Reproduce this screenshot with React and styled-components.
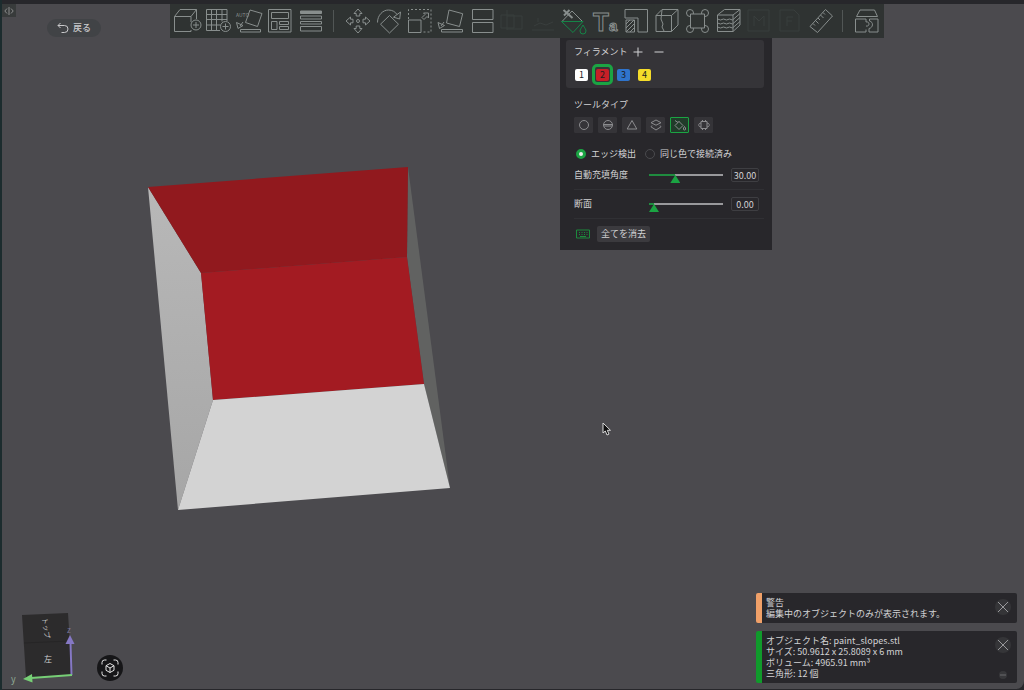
import React, { useState } from "react";
import styled, { createGlobalStyle } from "styled-components";

const ICONS = {
  addCube: (
    <>
      <path d="M18 15V9.500H1.500V24.500H18V23M1.500 9.500L7 2.500H23.500V12M18 9.500L23.500 2.500" />
      <circle cx="23" cy="18" r="5" />
      <path d="M23 15v6M20 18h6" />
    </>
  ),
  addPlate: (
    <>
      <path d="M2.500 2.500H23V14M2.500 2.500V23.500H16M7.500 2.500v21M12.500 2.500v21M18 2.500v12M2.500 7.500h20.500M2.500 12.500h20.500M2.500 18h14" />
      <circle cx="21.500" cy="19.500" r="5" />
      <path d="M21.500 16.500v6M18.500 19.500h6" />
    </>
  ),
  autoOrient: (
    <>
      <path d="M15 3l12 3.500-4.500 13-12-4zM5.500 22.500h20v2.500h-20zM8 15l-3 4M1.500 15.500l1.500 6 5-3z" />
      <text x="1" y="10" fontSize="5" stroke="none" fill="currentColor">
        AUTO
      </text>
    </>
  ),
  arrange: (
    <path d="M2.500 2.500h22.500v22.500H2.500zM5.500 5.500h17v6h-17zM5.500 14.500h5.500v8H5.500zM13.500 14.500h9v3h-9zM13.500 19.500h9v3h-9z" />
  ),
  layerHeight: (
    <>
      <path d="M3.500 4h21v2.500h-21z" fill="currentColor" />
      <path d="M3.500 9h21v3h-21zM3.500 14.500h21v2.500h-21zM3.500 19.500h21v4.500h-21z" />
    </>
  ),
  move: (
    <>
      <circle cx="14" cy="14" r="1.500" />
      {[0, 90, 180, 270].map((a) => (
        <path
          key={a}
          d="M14 2l4 4.500h-2.200v2.500h-3.600V6.500H10z"
          transform={`rotate(${a} 14 14)`}
        />
      ))}
    </>
  ),
  rotate: (
    <path d="M14.500 8.500l9 8.700-9 8.800-9-8.800zM2.500 15.500C2.500 8 8 3 13.500 3c4 0 7 2 8.500 4.500M25.500 5l-.8 7-6.200-1.800z" />
  ),
  scale: (
    <>
      <path d="M2.500 12V2.500H25V25H16" strokeDasharray="2 2" />
      <path d="M2.500 13h12.500v12.500H2.500zM16 10.500l3-3-1.500-1.500h5v5l-1.500-1.500-3 3z" />
    </>
  ),
  layFace: (
    <path d="M12 3l13.700 3.700L22.500 19.500 9.500 16zM4.500 22.500h21v2.500h-21zM7 15l-3 4M1 15.500l1.500 6 5-3z" />
  ),
  cut: <path d="M4.500 2.500H25V12.500H4.500zM4.500 15.500H25V25.500H4.500z" />,
  boolean: <path d="M3 8h13v13H3zM9 3v20M9 9h15v13H9" />,
  support: <path d="M3 23h22M5 19l6-3 6 2 7-3M9 11v4" />,
  paint: (
    <>
      <path d="M2 14.500L12 4l10.500 10.500z" />
      <path d="M3.500 3l9 8M4 8.500L9.500 3" strokeWidth="2" />
      <g stroke="#158447">
        <path d="M1.500 14.500h21.500L13 25.500zM23 18c-2 3.500-3 4.500-3 6a3 3 0 0 0 6 0c0-1.500-1-2.500-3-6z" />
      </g>
    </>
  ),
  text: (
    <text x="2" y="24" fontSize="26" fontFamily="Liberation Sans" fontWeight="700">
      T<tspan fontSize="15">a</tspan>
    </text>
  ),
  svgPart: (
    <>
      <path d="M3 2.500H25.500V25H16V11H3z" />
      <path d="M4 13h8.500v12H4zM4 17l4-4M4 21l8-8M4 25l8.500-8.500M8 25l4.500-4.500" />
    </>
  ),
  brim: (
    <path d="M3 8.500h15.500v16H3zM3 8.500l6-6H25L18.500 8.500M25 2.500V18L18.500 24.500M9 3l-1 9 2 5-1 3 2 4" />
  ),
  assemblyBox: (
    <>
      {[7, 22].map((x) =>
        [6, 22].map((y) => <circle key={`${x}-${y}`} cx={x} cy={y} r="3.500" />),
      )}
      <path d="M7.500 7h14v14h-14z" fill="#2f3332" />
    </>
  ),
  layers: (
    <path d="M3.500 8h15.500v16.500H3.500zM3.500 8l7-5.500H26L19 8M26 2.500V18l-7 6.500M3.500 12l3 1 3-1 3 1 3-1 3 1L26 6.500M3.500 16l3 1 3-1 3 1 3-1 3 1L26 10.500M3.500 20l3 1 3-1 3 1 3-1 3 1L26 14.500" />
  ),
  stitch: <path d="M3 3h21v21H3zM9 19V9l5 5 5-5v10" />,
  face: <path d="M4 3h14l5 5v16H4zM11 19V10h6M11 14h5" />,
  measure: (
    <path d="M3 19.500L18.500 2.500l7 6.500L10.500 25.500zM6 16.500l2 2M8.500 13.500l3 3M11 11l2 2M13.500 8l3 3M16 5.500l2 2" />
  ),
  assemble: (
    <path d="M7 3h14.500l3 6.500h-21zM2.500 12h10.500v3c4-1 4 5 0 4M2.500 12v13h10.500v-2.500M16.500 12h8.500v13h-9M16.500 12v2c4.500 1 3.500 7-.5 7.500V25" />
  ),
};

const ADD_TOOLS = [
  ["addCube", "追加"],
  ["addPlate", "プレートを追加"],
  ["autoOrient", "自動方向調整"],
  ["arrange", "レイアウト"],
  ["layerHeight", "積層ピッチ"],
];

const EDIT_TOOLS = [
  ["move", "移動"],
  ["rotate", "回転"],
  ["scale", "スケール"],
  ["layFace", "底面選択"],
  ["cut", "カット"],
  ["boolean", "ブーリアン", true],
  ["support", "サポート", true],
  ["paint", "カラーペイント"],
  ["text", "テキスト"],
  ["svgPart", "パーツ"],
  ["brim", "シーム"],
  ["assemblyBox", "ブリム"],
  ["layers", "ファジースキン"],
  ["stitch", "メッシュ", true],
  ["face", "面", true],
  ["measure", "測定"],
];

const FILAMENTS = [
  { id: 1, color: "#ffffff" },
  { id: 2, color: "#c71f27" },
  { id: 3, color: "#2f74cc" },
  { id: 4, color: "#f5dc2a" },
];

const BRUSHES = [
  { id: "circle", label: "円", art: <circle cx="7" cy="7" r="4.500" /> },
  {
    id: "sphere",
    label: "球",
    art: (
      <>
        <circle cx="7" cy="7" r="4.500" />
        <path d="M2.500 6.500h9M3 8h8" />
      </>
    ),
  },
  { id: "triangle", label: "三角形", art: <path d="M7 2.500l4.800 8.500H2.200z" /> },
  {
    id: "height",
    label: "高さ範囲",
    art: <path d="M7 2l5 2.700-5 2.500-5-2.500zM3 7.500l-1 1.300L7 12l5-3.200-1-1.300" />,
  },
  {
    id: "fill",
    label: "塗りつぶし",
    art: <path d="M5.500 3L10 7.500l-4 4-4-4 4-4M2 2.500l3 2M11.500 8.500c-1.500 2-1.500 3.500 0 3.500s1.500-1.500 0-3.500z" />,
  },
  {
    id: "gap",
    label: "隙間充填",
    art: <path d="M4 3.500h6v7H4zM4 5c-3 0-3 4 0 4M10 5c3 0 3 4 0 4M5.500 2v1.500M8.500 2v1.500M5.500 10.500V12M8.500 10.500V12" />,
  },
];

const ToolIcon = ({ name }) => (
  <LineArt viewBox="0 0 28 28" width="28" height="28" aria-hidden="true">
    {ICONS[name]}
  </LineArt>
);

const ToolGroup = ({ items }) =>
  items.map(([name, label, disabled]) => (
    <ToolButton key={name} type="button" aria-label={label} disabled={disabled}>
      <ToolIcon name={name} />
    </ToolButton>
  ));

const SliderRow = ({ id, label, max, initial }) => {
  const [value, setValue] = useState(initial);
  const ratio = value / max;

  return (
    <SettingRow>
      <label htmlFor={id}>{label}</label>
      <Slider
        id={id}
        type="range"
        min="0"
        max={max}
        value={value}
        onChange={(e) => setValue(Number(e.target.value))}
        style={{ "--fill": `calc(5px + (100% - 10px) * ${ratio})` }}
      />
      <ValueBox aria-label={`${label} 値`} value={value.toFixed(2)} readOnly />
    </SettingRow>
  );
};

const PaintPanel = () => {
  const [filament, setFilament] = useState(2);
  const [brush, setBrush] = useState("fill");
  const [mode, setMode] = useState("edge");

  return (
    <Panel>
      <FilamentBox>
        <FilamentTitle>
          <span>フィラメント</span>
          <SignButton type="button" aria-label="追加">
            <LineArt viewBox="0 0 10 10" width="10" height="10">
              <path d="M5 .5v9M.5 5h9" />
            </LineArt>
          </SignButton>
          <SignButton type="button" aria-label="削除">
            <LineArt viewBox="0 0 10 10" width="10" height="10">
              <path d="M.5 5h9" />
            </LineArt>
          </SignButton>
        </FilamentTitle>
        <Chips>
          {FILAMENTS.map((f) => (
            <Chip
              key={f.id}
              type="button"
              $active={f.id === filament}
              onClick={() => setFilament(f.id)}
            >
              <ChipColor $color={f.color}>{f.id}</ChipColor>
            </Chip>
          ))}
        </Chips>
      </FilamentBox>

      <PanelBody>
        <span>ツールタイプ</span>
        <Brushes>
          {BRUSHES.map((b) => (
            <BrushButton
              key={b.id}
              type="button"
              aria-label={b.label}
              $active={b.id === brush}
              onClick={() => setBrush(b.id)}
            >
              <LineArt viewBox="0 0 14 14" width="14" height="14">
                {b.art}
              </LineArt>
            </BrushButton>
          ))}
        </Brushes>
        <Modes>
          <ModeLabel>
            <Radio
              type="radio"
              name="mode"
              checked={mode === "edge"}
              onChange={() => setMode("edge")}
            />
            エッジ検出
          </ModeLabel>
          <ModeLabel>
            <Radio
              type="radio"
              name="mode"
              checked={mode === "color"}
              onChange={() => setMode("color")}
            />
            同じ色で接続済み
          </ModeLabel>
        </Modes>
        <SliderRow id="angle" label="自動充填角度" max={90} initial={30} />
        <SliderRow id="section" label="断面" max={1} initial={0} />
        <PanelFooter>
          <LineArt viewBox="0 0 14 10" width="14" height="10" aria-hidden="true">
            <path d="M.5 1h13v8H.5zM3 3.500h1M5.500 3.500h1M8 3.500h1M10.500 3.500h1M3 5.500h1M5.500 5.500h1M8 5.500h1M10.500 5.500h1M4 7.500h6" />
          </LineArt>
          <EraseButton type="button">全てを消去</EraseButton>
        </PanelFooter>
      </PanelBody>
    </Panel>
  );
};

const Notification = ({ color, lines, collapsible }) => (
  <Notice $color={color}>
    <NoticeText>
      {lines.map((line) => (
        <p key={line}>{line}</p>
      ))}
    </NoticeText>
    <NoticeActions>
      <CloseButton type="button" aria-label="閉じる">
        <LineArt viewBox="0 0 16 16" width="16" height="16">
          <path d="M3 3l10 10M13 3L3 13" />
        </LineArt>
      </CloseButton>
      {collapsible && (
        <MinimizeButton type="button" aria-label="最小化">
          <LineArt viewBox="0 0 8 8" width="8" height="8">
            <path d="M1 4h6" />
          </LineArt>
        </MinimizeButton>
      )}
    </NoticeActions>
  </Notice>
);

const Model = () => (
  <ModelArt viewBox="0 0 304 346" width="304" height="346" aria-hidden="true">
    <defs>
      <linearGradient id="leftFace" x1="0" y1="0" x2="0" y2="1">
        <stop offset="0" stopColor="#b8b8b8" />
        <stop offset="1" stopColor="#a6a6a6" />
      </linearGradient>
    </defs>
    <path d="M260 1l-1 90 17 127 26 104z" fill="#616261" />
    <path d="M0 21L53 107 65 234 30 344z" fill="url(#leftFace)" />
    <path d="M0 21L260 1l-1 90L53 107z" fill="#91191e" />
    <path d="M53 107l206-16 17 127L65 234z" fill="#a31b22" />
    <path d="M65 234l211-16 26 104L30 344z" fill="#d3d3d3" />
  </ModelArt>
);

const ViewCube = () => (
  <CubeArt viewBox="8 607 76 76" width="76" height="76" aria-hidden="true">
    <path d="M22 615l46-2 4 62-46 3z" fill="#2c2b2c" />
    <path d="M24 643l45-2" stroke="#262526" />
    <text x="0" y="0" fontSize="7" fill="#c8c8c8" transform="translate(42 618) rotate(82)">
      トップ
    </text>
    <text x="44" y="662" fontSize="8" fill="#d0d0d0">
      左
    </text>
    <path d="M71.500 675L70.500 643" stroke="#8578c4" strokeWidth="2" />
    <path d="M70 635l4.500 9h-9z" fill="#8578c4" />
    <path d="M72 675l-41 3" stroke="#77cf76" strokeWidth="2" />
    <path d="M23 679l9-5 .5 8.500z" fill="#77cf76" />
    <text x="67" y="633" fontSize="8" fill="#7a759b">
      z
    </text>
    <text x="11" y="682" fontSize="9" fill="#8fa893">
      y
    </text>
  </CubeArt>
);

const App = () => (
  <Window>
    <GlobalStyle />
    <Viewport>
      <Model />
      <Pointer viewBox="0 0 10 14" width="10" height="14" aria-hidden="true">
        <path
          d="M1 1v10l2.300-2 1.700 4 2-.9-1.700-3.800H8.500z"
          fill="#0d0d0d"
          stroke="#d8d8d8"
        />
      </Pointer>

      <Header>
        <Corner>
          <CollapseTab type="button" aria-label="サイドバー">
            <LineArt viewBox="0 0 10 8" width="10" height="8">
              <path d="M3 1.500L.8 4 3 6.500M7 1.500L9.200 4 7 6.500M5 0v8" />
            </LineArt>
          </CollapseTab>
          <BackButton type="button">
            <LineArt viewBox="0 0 12 12" width="12" height="12">
              <path d="M3.500 1L1 3.500 3.500 6M1 3.500h6.500a3.500 3.500 0 0 1 0 7H4.500" />
            </LineArt>
            戻る
          </BackButton>
        </Corner>
        <ToolArea>
          <Toolbar>
            <FixedTools>
              <ToolGroup items={ADD_TOOLS} />
            </FixedTools>
            <Separator />
            <EditTools>
              <ToolGroup items={EDIT_TOOLS} />
            </EditTools>
            <Separator />
            <ToolButton type="button" aria-label="組立">
              <ToolIcon name="assemble" />
            </ToolButton>
          </Toolbar>
          <PaintPanel />
        </ToolArea>
      </Header>

      <Footer>
        <ViewControls>
          <ViewCube />
          <FitButton type="button" aria-label="全体表示">
            <LineArt viewBox="0 0 18 18" width="18" height="18">
              <path d="M1 5.500V3.500A2.500 2.500 0 0 1 3.500 1h2M12.500 1h2A2.500 2.500 0 0 1 17 3.500v2M17 12.500v2a2.500 2.500 0 0 1-2.500 2.500h-2M5.500 17h-2A2.500 2.500 0 0 1 1 14.500v-2M9 4.500l4 2.200v4.600l-4 2.200-4-2.200V6.700zM5 6.700l4 2.300 4-2.300M9 9v4.500" />
            </LineArt>
          </FitButton>
        </ViewControls>
        <Notices>
          <Notification
            color="#f0a068"
            lines={["警告", "編集中のオブジェクトのみが表示されます。"]}
          />
          <Notification
            color="#109a2b"
            lines={[
              "オブジェクト名: paint_slopes.stl",
              "サイズ: 50.9612 x 25.8089 x 6 mm",
              "ボリューム: 4965.91 mm³",
              "三角形: 12 個",
            ]}
            collapsible
          />
        </Notices>
      </Footer>
    </Viewport>
  </Window>
);

// Styled components
const GlobalStyle = createGlobalStyle`
  * {
    box-sizing: border-box;
  }

  body {
    margin: 0;
    background: #222327;
    color: #d2d2d4;
    font-family: "Noto Sans CJK JP", "Noto Sans", sans-serif;
    font-size: 9px;
    line-height: 12px;
  }

  button, input {
    margin: 0;
    padding: 0;
    border: 0;
    color: inherit;
    font: inherit;
  }

  p {
    margin: 0;
  }
`;

const LineArt = styled.svg`
  display: block;
  flex: none;
  overflow: visible;
  fill: none;
  stroke: currentColor;
  stroke-width: 1;
`;

const Window = styled.div`
  display: flex;
  min-height: 100vh;
  padding: 4px 0 1px 2px;
  background: linear-gradient(90deg, #1c2c2e 0 2px, #27272b 2px);
`;

const Viewport = styled.main`
  position: relative;
  flex: 1;
  display: flex;
  flex-direction: column;
  justify-content: space-between;
  background: #4b4a4e;
  border-bottom-right-radius: 8px;
`;

const ModelArt = styled.svg`
  position: absolute;
  left: 146px;
  top: 162px;
`;

const Pointer = styled.svg`
  position: absolute;
  left: 600px;
  top: 418px;
`;

const Header = styled.header`
  display: grid;
  grid-template-columns: 168px minmax(0, 714px);
`;

const Corner = styled.div`
  display: flex;
  align-items: flex-start;
  gap: 31px;
`;

const CollapseTab = styled.button`
  display: grid;
  place-items: center;
  width: 14px;
  height: 13px;
  background: #383b3b;
  color: #8b8d8d;
`;

const BackButton = styled.button`
  display: flex;
  align-items: center;
  justify-content: center;
  gap: 4px;
  width: 54px;
  height: 18px;
  margin-top: 15px;
  border-radius: 9px;
  background: #414346;
  color: #c9c9cb;
  font-weight: 500;
`;

const ToolArea = styled.div`
  display: flex;
  flex-direction: column;
`;

const Toolbar = styled.div`
  display: flex;
  align-items: center;
  height: 34px;
  padding: 0 2px;
  background: #2f3332;
  color: #888e8d;
`;

const FixedTools = styled.div`
  display: grid;
  grid-template-columns: repeat(5, 31px);
`;

const EditTools = styled.div`
  flex: 1;
  display: grid;
  grid-template-columns: repeat(16, minmax(0, 1fr));
  justify-items: center;
`;

const ToolButton = styled.button`
  display: grid;
  place-items: center;
  width: 30px;
  height: 30px;
  background: none;

  &:disabled {
    color: #393e3d;
  }
`;

const Separator = styled.span`
  flex: none;
  width: 1px;
  height: 22px;
  margin: 0 9px 0 6px;
  background: #515655;
`;

const Panel = styled.section`
  width: 212px;
  margin-left: 390px;
  padding: 2px 8px 8px 6px;
  background: #28272b;
`;

const FilamentBox = styled.div`
  padding: 0 5px 3px;
  border-radius: 3px;
  background: #353438;
`;

const FilamentTitle = styled.div`
  display: flex;
  align-items: center;
  gap: 11px;
  height: 24px;
  padding-left: 3px;

  span {
    margin-right: -6px;
  }
`;

const SignButton = styled.button`
  background: none;
`;

const Chips = styled.div`
  display: flex;
`;

const Chip = styled.button`
  display: grid;
  place-items: center;
  width: 21px;
  height: 21px;
  border: 3px solid ${(props) => (props.$active ? "#1ba443" : "transparent")};
  border-radius: 5px;
  background: none;
`;

const ChipColor = styled.span`
  width: 13px;
  height: 12px;
  border-radius: 2px;
  background: ${(props) => props.$color};
  color: #1d1d1f;
  text-align: center;
`;

const PanelBody = styled.div`
  display: flex;
  flex-direction: column;
  padding: 11px 0 0 8px;
`;

const Brushes = styled.div`
  display: flex;
  gap: 5px;
  margin-top: 6px;
`;

const BrushButton = styled.button`
  display: grid;
  place-items: center;
  width: 19px;
  height: 16px;
  border: 1px solid ${(props) => (props.$active ? "#1ba443" : "#353438")};
  border-radius: 1px;
  background: ${(props) => (props.$active ? "#213c2a" : "#353438")};
  color: #8c8c8f;
`;

const Modes = styled.div`
  display: flex;
  gap: 9px;
  margin: 15px 0 1px 2px;
`;

const ModeLabel = styled.label`
  display: flex;
  align-items: center;
  gap: 5px;
`;

const Radio = styled.input`
  appearance: none;
  width: 10px;
  height: 10px;
  border: 1px solid #4a4a4e;
  border-radius: 50%;

  &:checked {
    border: 3px solid #1ba443;
    background: #f0f0f0;
  }
`;

const SettingRow = styled.div`
  display: grid;
  grid-template-columns: 67px 1fr 28px;
  align-items: center;
  gap: 8px;
  height: 29px;
  padding-right: 5px;
  border-bottom: 1px solid #303034;
`;

const Slider = styled.input`
  appearance: none;
  width: 100%;
  height: 16px;
  background:
    linear-gradient(90deg, #1f8c3f var(--fill), #99999c var(--fill)) center / 100% 2px
    no-repeat;

  &::-webkit-slider-thumb {
    appearance: none;
    width: 10px;
    height: 16px;
    background: #1ba443;
    clip-path: polygon(50% 8px, 100% 100%, 0 100%);
  }
`;

const ValueBox = styled.input`
  width: 100%;
  height: 14px;
  border: 1px solid #3e3e42;
  border-radius: 2px;
  background: none;
  text-align: center;
`;

const PanelFooter = styled.div`
  display: flex;
  align-items: center;
  gap: 7px;
  padding: 7px 0 0 2px;

  svg {
    color: #1c8a3d;
  }
`;

const EraseButton = styled.button`
  width: 53px;
  height: 16px;
  border-radius: 2px;
  background: #3b3a3e;
`;

const Footer = styled.footer`
  display: flex;
  align-items: flex-end;
  justify-content: space-between;
  padding: 0 7px 6px 6px;
`;

const ViewControls = styled.div`
  display: flex;
  align-items: flex-end;
  gap: 13px;
`;

const CubeArt = styled.svg`
  overflow: visible;
`;

const FitButton = styled.button`
  display: grid;
  place-items: center;
  width: 26px;
  height: 26px;
  margin-bottom: 2px;
  border-radius: 50%;
  background: #161618;
  color: #e4e4e4;
`;

const Notices = styled.div`
  display: flex;
  flex-direction: column;
  gap: 8px;
  width: 261px;
`;

const Notice = styled.section`
  display: flex;
  justify-content: space-between;
  padding: 4px 6px 4px 4px;
  border-left: 6px solid ${(props) => props.$color};
  border-radius: 2px;
  background: #28272b;
  line-height: 11px;
`;

const NoticeText = styled.div`
  white-space: nowrap;
`;

const NoticeActions = styled.div`
  display: flex;
  flex-direction: column;
  align-items: center;
  justify-content: space-between;
  padding-top: 2px;
`;

const CloseButton = styled.button`
  border-radius: 50%;
  background: #353538;
  color: #98989b;
`;

const MinimizeButton = styled.button`
  border-radius: 50%;
  background: #38383b;
  color: #6b6b6e;
`;

export default App;
